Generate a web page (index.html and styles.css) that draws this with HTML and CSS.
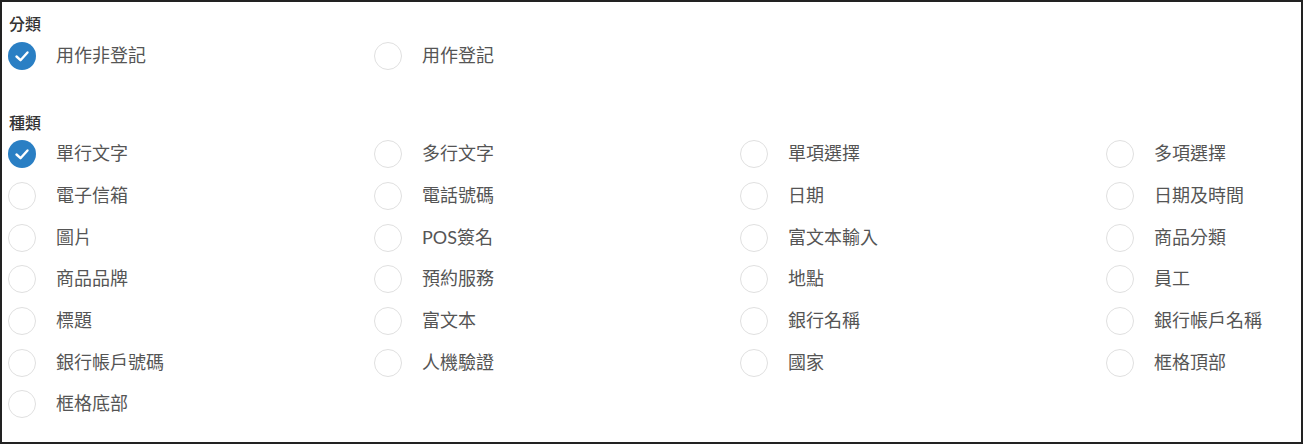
FILE: index.html
```html
<!DOCTYPE html>
<html lang="zh-Hant">
<head>
<meta charset="utf-8">
<link rel="stylesheet" href="styles.css">
</head>
<body>
<div class="panel">
  <section class="group">
    <div class="label">分類</div>
    <div class="options">
      <div class="opt"><span class="radio checked"><svg viewBox="0 0 28 28" width="28" height="28"><path d="M8.5 14.5 L12.5 18.2 L19.5 10.5" fill="none" stroke="#fff" stroke-width="2.4" stroke-linecap="round" stroke-linejoin="round"/></svg></span><span class="txt">用作非登記</span></div>
      <div class="opt"><span class="radio"></span><span class="txt">用作登記</span></div>
    </div>
  </section>
  <section class="group second">
    <div class="label">種類</div>
    <div class="options">
      <div class="opt"><span class="radio checked"><svg viewBox="0 0 28 28" width="28" height="28"><path d="M8.5 14.5 L12.5 18.2 L19.5 10.5" fill="none" stroke="#fff" stroke-width="2.4" stroke-linecap="round" stroke-linejoin="round"/></svg></span><span class="txt">單行文字</span></div>
      <div class="opt"><span class="radio"></span><span class="txt">多行文字</span></div>
      <div class="opt"><span class="radio"></span><span class="txt">單項選擇</span></div>
      <div class="opt"><span class="radio"></span><span class="txt">多項選擇</span></div>
      <div class="opt"><span class="radio"></span><span class="txt">電子信箱</span></div>
      <div class="opt"><span class="radio"></span><span class="txt">電話號碼</span></div>
      <div class="opt"><span class="radio"></span><span class="txt">日期</span></div>
      <div class="opt"><span class="radio"></span><span class="txt">日期及時間</span></div>
      <div class="opt"><span class="radio"></span><span class="txt">圖片</span></div>
      <div class="opt"><span class="radio"></span><span class="txt">POS簽名</span></div>
      <div class="opt"><span class="radio"></span><span class="txt">富文本輸入</span></div>
      <div class="opt"><span class="radio"></span><span class="txt">商品分類</span></div>
      <div class="opt"><span class="radio"></span><span class="txt">商品品牌</span></div>
      <div class="opt"><span class="radio"></span><span class="txt">預約服務</span></div>
      <div class="opt"><span class="radio"></span><span class="txt">地點</span></div>
      <div class="opt"><span class="radio"></span><span class="txt">員工</span></div>
      <div class="opt"><span class="radio"></span><span class="txt">標題</span></div>
      <div class="opt"><span class="radio"></span><span class="txt">富文本</span></div>
      <div class="opt"><span class="radio"></span><span class="txt">銀行名稱</span></div>
      <div class="opt"><span class="radio"></span><span class="txt">銀行帳戶名稱</span></div>
      <div class="opt"><span class="radio"></span><span class="txt">銀行帳戶號碼</span></div>
      <div class="opt"><span class="radio"></span><span class="txt">人機驗證</span></div>
      <div class="opt"><span class="radio"></span><span class="txt">國家</span></div>
      <div class="opt"><span class="radio"></span><span class="txt">框格頂部</span></div>
      <div class="opt"><span class="radio"></span><span class="txt">框格底部</span></div>
    </div>
  </section>
</div>
</body>
</html>
```
FILE: styles.css
```css
html, body {
  margin: 0;
  padding: 0;
  background: #fff;
}
body {
  font-family: Lato, "Noto Sans CJK TC", sans-serif;
}
.panel {
  box-sizing: border-box;
  width: 1303px;
  height: 444px;
  border: 2px solid #222;
  padding: 12px 0 0 6px;
}
.group.second {
  margin-top: 36px;
}
.label {
  height: 20px;
  line-height: 20px;
  font-size: 16px;
  font-weight: 500;
  color: #333;
  padding-left: 1px;
}
.options {
  display: grid;
  grid-template-columns: repeat(3, 366px) 1fr;
  grid-auto-rows: 41.67px;
  margin-top: 1px;
}
.opt {
  display: flex;
  align-items: center;
  gap: 20px;
}
.radio {
  box-sizing: border-box;
  width: 28px;
  height: 28px;
  border-radius: 50%;
  border: 1.5px solid #e0e0e0;
  flex: none;
  display: flex;
  align-items: center;
  justify-content: center;
}
.radio.checked {
  border: none;
  background: #2a7fc4;
}
.txt {
  font-size: 18px;
  color: #555;
  line-height: 24px;
  margin-top: -2px;
}
```
